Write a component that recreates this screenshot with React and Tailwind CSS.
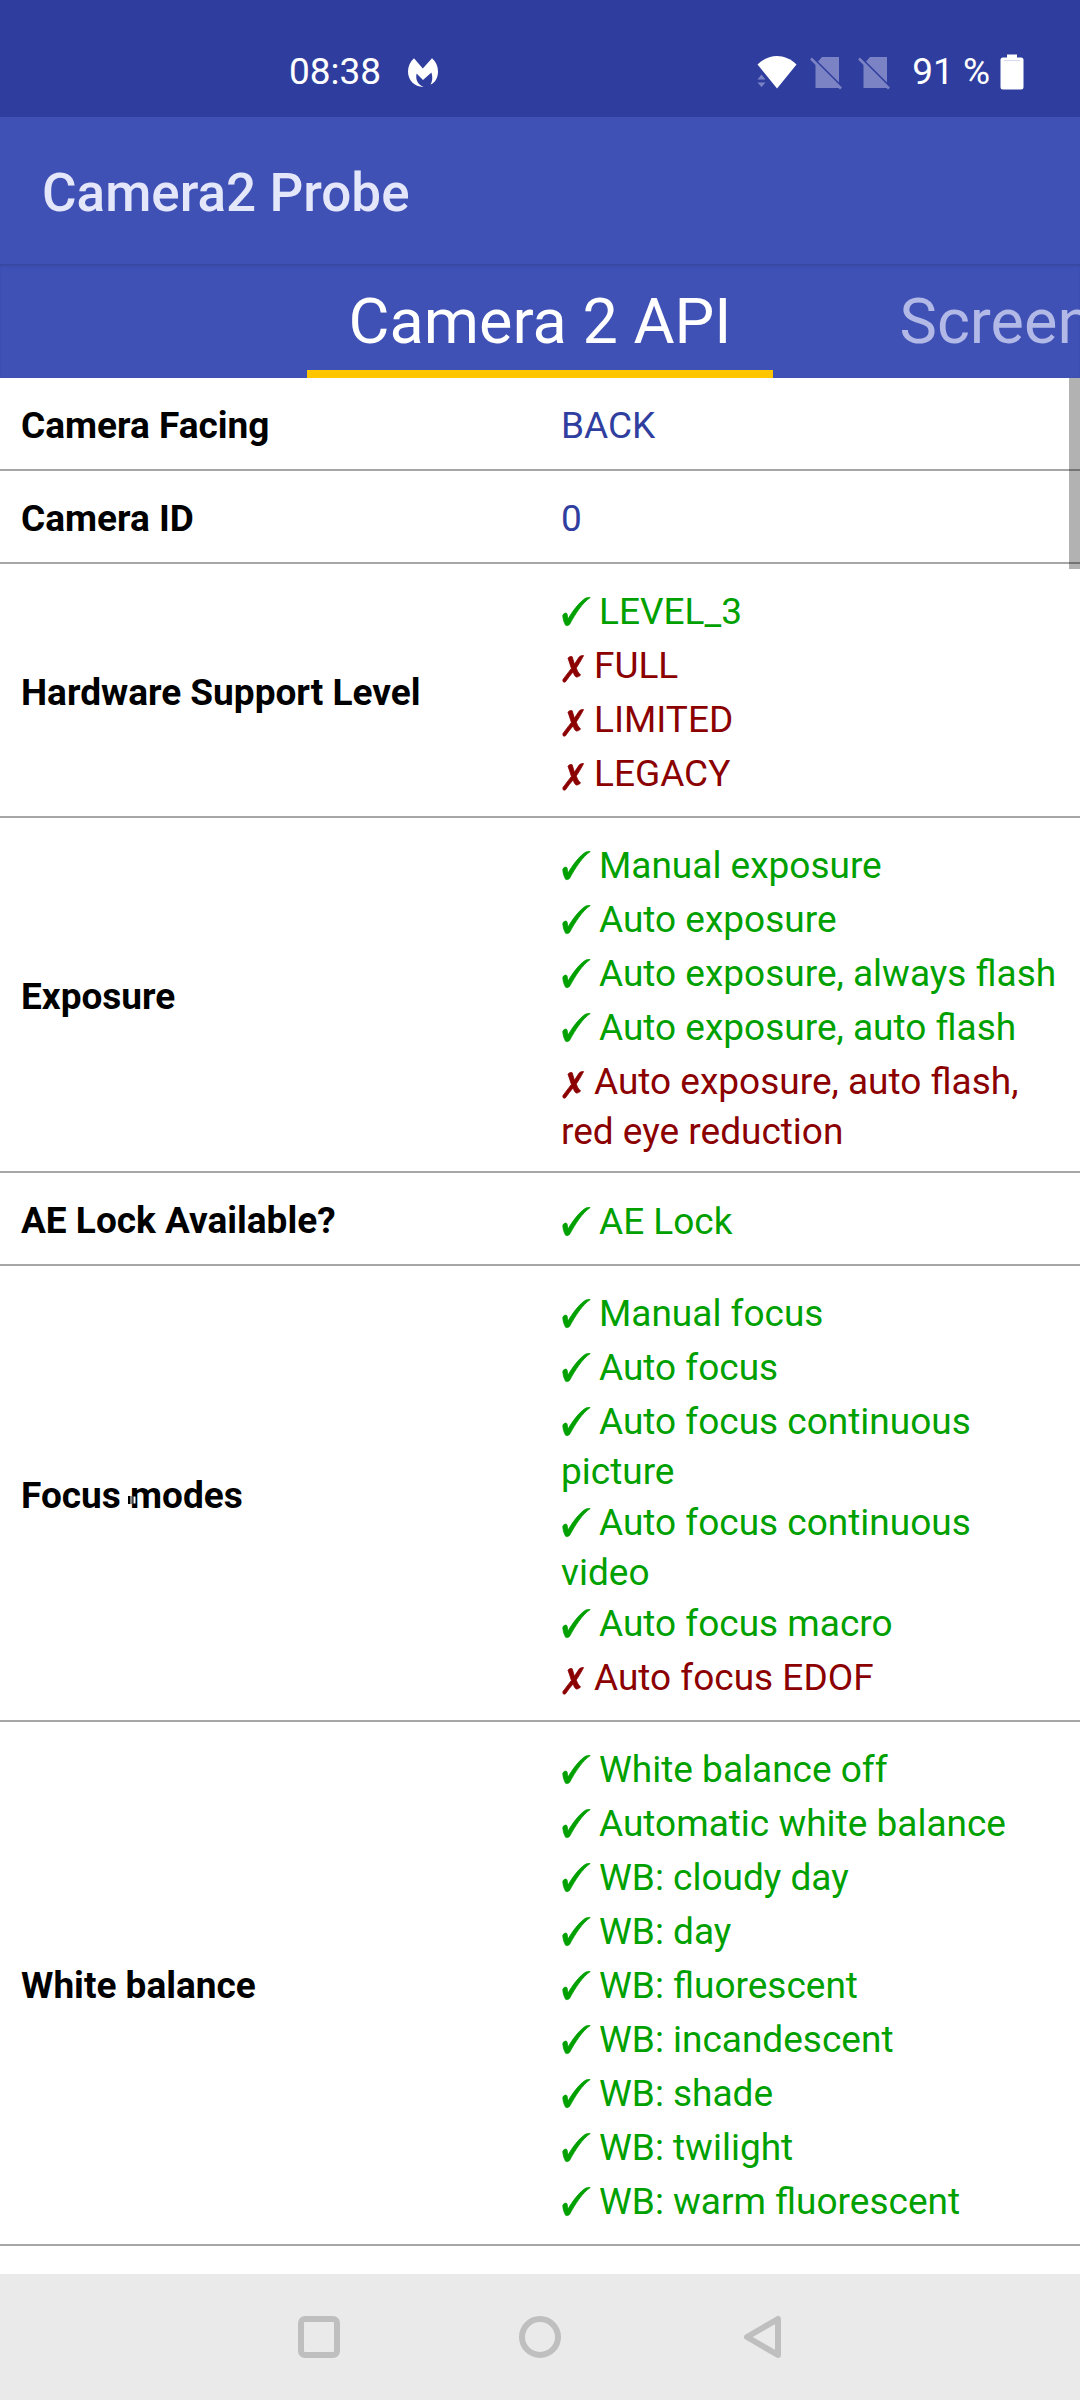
import React from "react";

const rows = [
  { label: "Camera Facing", value: "BACK" },
  { label: "Camera ID", value: "0" },
  {
    label: "Hardware Support Level",
    items: [
      [true, "LEVEL_3"],
      [false, "FULL"],
      [false, "LIMITED"],
      [false, "LEGACY"],
    ],
  },
  {
    label: "Exposure",
    items: [
      [true, "Manual exposure"],
      [true, "Auto exposure"],
      [true, "Auto exposure, always flash"],
      [true, "Auto exposure, auto flash"],
      [false, "Auto exposure, auto flash, red eye reduction"],
    ],
  },
  { label: "AE Lock Available?", items: [[true, "AE Lock"]] },
  {
    label: "Focus modes",
    pointer: true,
    items: [
      [true, "Manual focus"],
      [true, "Auto focus"],
      [true, "Auto focus continuous picture"],
      [true, "Auto focus continuous video"],
      [true, "Auto focus macro"],
      [false, "Auto focus EDOF"],
    ],
  },
  {
    label: "White balance",
    items: [
      [true, "White balance off"],
      [true, "Automatic white balance"],
      [true, "WB: cloudy day"],
      [true, "WB: day"],
      [true, "WB: fluorescent"],
      [true, "WB: incandescent"],
      [true, "WB: shade"],
      [true, "WB: twilight"],
      [true, "WB: warm fluorescent"],
    ],
  },
];

function CheckMark() {
  return (
    <svg role="img" aria-label="supported" className="inline-block h-[54px] w-[38px] align-[-14px]" viewBox="0 0 38 54" fill="currentColor" stroke="currentColor" strokeWidth="0.8">
      <path d="M1.8 31.6C1.8 30 4.2 28.8 5.4 29.2C6.6 29.8 6.2 32.6 7.2 34.8C11 28 18 18.4 24 14.6C25.4 13.6 27.6 13.4 29.2 13.6C21.5 18.6 14 30.4 8.8 40C7.8 41.6 5.4 42 4.6 41.2C3.4 39.4 1.9 35 1.8 31.6Z" />
    </svg>
  );
}

function CrossMark() {
  return (
    <svg role="img" aria-label="not supported" className="inline-block h-[54px] w-[33px] align-[-14px]" viewBox="0 0 33 54" fill="currentColor" stroke="currentColor" strokeWidth="0.8">
      <path d="M22.6 17.6C20.2 17.4 18.6 18.2 17.6 19.8L13.4 26.2C12.6 23.8 12 21.2 11.2 18.8C9.8 18.2 7.8 18.8 7 20.2C8.2 23.4 9.2 26.8 10.4 30.4L2 41.4C1.6 42.6 2 44 3 44.2C4.2 44.2 5.2 43.4 5.6 42.2C7.4 39.6 9.6 36.8 12 34C13 36.4 13.8 38.2 15.2 39C16.8 39.2 18.8 38.2 19.6 36.8C17.4 35.4 16.4 32.8 15.2 30C17.6 26.6 20 22.6 22.6 17.6Z" />
    </svg>
  );
}

function NoSim() {
  return (
    <svg aria-hidden="true" className="h-9 w-9" viewBox="0 0 36 36">
      <path d="M14 3H31V28.5L10 7.5ZM7.5 9L32 34H7.5Z" fill="#7c83c5" />
      <path d="M3 4.5L33 34.5" stroke="#7c83c5" strokeWidth="2.6" />
    </svg>
  );
}

function StatusBar() {
  return (
    <header className="flex h-[117px] items-center justify-between bg-[#2f3e9e] pt-[26px] pr-14 pl-[289px] text-[37px] leading-none text-white">
      <div className="flex items-center gap-[26px]">
        <time>08:38</time>
        <svg aria-hidden="true" className="h-8 w-8" viewBox="0 0 32 32" fill="#fff">
          <path d="M7 2.2L15.8 12.4L25 2.2C29 5.6 31 10.4 31 15.4C31 21.6 28.4 26.4 23.6 28.6C25.6 25.2 25.8 20.8 24.4 16.6L16 24L9.6 17.4C8.2 23.6 11 28.6 16.6 31C7.6 31.2 1 24.4 1 15.6C1 10.4 3.2 5.6 7 2.2Z" />
        </svg>
      </div>
      <div className="flex items-center">
        <svg aria-hidden="true" className="mr-2.5 h-9 w-[42px]" viewBox="0 0 42 36">
          <path d="M1.5 10.5C13 -1 29 -1 40.5 10.5L21 34.5Z" fill="#fff" />
          <path d="M1.5 25.5L5.5 20.5L9.5 25.5ZM1.5 28.5H9.5L5.5 33Z" fill="#7c83c5" />
        </svg>
        <div className="flex gap-3">
          <NoSim />
          <NoSim />
        </div>
        <span className="mr-2.5 ml-5">91 %</span>
        <svg aria-hidden="true" className="h-9 w-6" viewBox="0 0 24 36">
          <path d="M7 0.5H17V3.5H21Q23.5 3.5 23.5 6V33Q23.5 35.5 21 35.5H3Q0.5 35.5 0.5 33V6Q0.5 3.5 3 3.5H7Z" fill="#fff" />
          <path d="M4 6.5H20" stroke="#d5d8ee" strokeWidth="1" />
        </svg>
      </div>
    </header>
  );
}

function Tabs() {
  return (
    <nav
      role="tablist"
      className="grid h-[114px] grid-cols-[minmax(0,1fr)_auto_minmax(0,1fr)] overflow-hidden bg-[#3f51b5] text-[63px] leading-none shadow-[inset_0_3px_3px_-1px_#3747a0]"
    >
      <span />
      <button role="tab" aria-selected="true" className="border-b-8 border-[#ffc600] px-[42px] pt-2 text-white">
        Camera 2 API
      </button>
      <button role="tab" aria-selected="false" className="overflow-hidden pl-[126px] text-left whitespace-nowrap text-[#b2b9e6]">
        Screen
      </button>
    </nav>
  );
}

function PointerMark() {
  return (
    <svg aria-hidden="true" className="absolute top-[21px] left-[107px] h-2.5 w-2.5" viewBox="0 0 10 10">
      <path d="M0 1H2.5V9H0Z" fill="#000" />
      <path d="M2.5 1H5V9H2.5Z" fill="#888" />
      <path d="M5 1H8V9H5Z" fill="#fff" stroke="#000" strokeWidth="1" />
    </svg>
  );
}

function ProbeTable() {
  return (
    <table className="w-full table-fixed border-separate border-spacing-0 text-[37px] leading-[47px]">
      <tbody>
        {rows.map((row) => (
          <tr key={row.label} className="h-[93px]">
            <th scope="row" className="border-b-2 border-[#a6a6a6] pt-5 pr-5 pb-4 pl-[21px] text-left align-middle font-bold text-black">
              <span className="relative">
                {row.label}
                {row.pointer && <PointerMark />}
              </span>
            </th>
            <td className="border-b-2 border-[#a6a6a6] pt-5 pr-5 pb-4 pl-[21px] align-middle text-[#303f9f]">
              {row.value}
              {row.items && (
                <ul>
                  {row.items.map(([ok, text]) => (
                    <li key={text} className={ok ? "text-[#00a000]" : "text-[#8b0000]"}>
                      {ok ? <CheckMark /> : <CrossMark />}
                      {text}
                    </li>
                  ))}
                </ul>
              )}
            </td>
          </tr>
        ))}
      </tbody>
    </table>
  );
}

function NavBar() {
  return (
    <footer className="flex h-[126px] items-center justify-center gap-[173px] bg-[#eaeaea]">
      <button aria-label="Recent apps">
        <svg className="h-12 w-12" viewBox="0 0 48 48" fill="none" stroke="#bfbfbf" strokeWidth="6">
          <rect x="6" y="6" width="36" height="36" rx="4" />
        </svg>
      </button>
      <button aria-label="Home">
        <svg className="h-12 w-12" viewBox="0 0 48 48" fill="none" stroke="#bfbfbf" strokeWidth="6">
          <circle cx="24" cy="24" r="18" />
        </svg>
      </button>
      <button aria-label="Back">
        <svg className="h-12 w-12" viewBox="0 0 48 48" fill="none" stroke="#bfbfbf" strokeWidth="6" strokeLinejoin="round">
          <path d="M41 6V42L10 24Z" />
        </svg>
      </button>
    </footer>
  );
}

export default function App() {
  return (
    <div className="flex min-h-screen flex-col bg-white font-[Roboto,sans-serif]">
      <StatusBar />
      <div className="flex h-[147px] items-center bg-[#3f51b5] px-[42px]">
        <h1 className="pt-1.5 text-[53px] leading-none font-medium text-[#e4e7fa]">Camera2 Probe</h1>
      </div>
      <Tabs />
      <main className="relative flex-1">
        <ProbeTable />
        <div className="absolute top-0 right-0 h-[191px] w-[11px] bg-black/30" />
      </main>
      <NavBar />
    </div>
  );
}
